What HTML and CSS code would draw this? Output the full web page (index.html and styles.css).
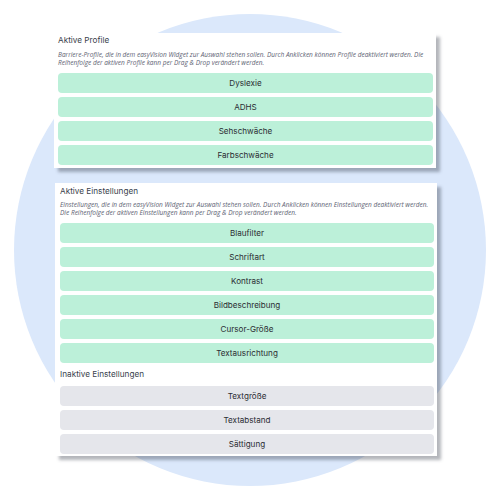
FILE: index.html
```html
<!DOCTYPE html>
<html lang="de">
<head>
<meta charset="utf-8">
<link rel="stylesheet" href="styles.css">
</head>
<body>
<div class="bg-circle"></div>
<main class="page">
  <section class="card card-profiles">
    <h2 class="title">Aktive Profile</h2>
    <p class="desc">Barriere-Profile, die in dem easyVision Widget zur Auswahl stehen sollen. Durch Anklicken können Profile deaktiviert werden. Die Reihenfolge der aktiven Profile kann per Drag &amp; Drop verändert werden.</p>
    <ul class="list">
      <li class="item active">Dyslexie</li>
      <li class="item active">ADHS</li>
      <li class="item active">Sehschwäche</li>
      <li class="item active">Farbschwäche</li>
    </ul>
  </section>
  <section class="card card-settings">
    <h2 class="title">Aktive Einstellungen</h2>
    <p class="desc">Einstellungen, die in dem easyVision Widget zur Auswahl stehen sollen. Durch Anklicken können Einstellungen deaktiviert werden. Die Reihenfolge der aktiven Einstellungen kann per Drag &amp; Drop verändert werden.</p>
    <ul class="list">
      <li class="item active">Blaufilter</li>
      <li class="item active">Schriftart</li>
      <li class="item active">Kontrast</li>
      <li class="item active">Bildbeschreibung</li>
      <li class="item active">Cursor-Größe</li>
      <li class="item active">Textausrichtung</li>
    </ul>
    <h2 class="title title-inactive">Inaktive Einstellungen</h2>
    <ul class="list">
      <li class="item inactive">Textgröße</li>
      <li class="item inactive">Textabstand</li>
      <li class="item inactive">Sättigung</li>
    </ul>
  </section>
</main>
</body>
</html>
```

FILE: styles.css
```css
html, body {
  margin: 0;
  padding: 0;
  background: #ffffff;
  width: 500px;
  height: 500px;
  overflow: hidden;
  font-family: Inter, "Noto Sans", sans-serif;
}

.bg-circle {
  position: absolute;
  left: 14px;
  top: 14px;
  width: 472px;
  height: 472px;
  border-radius: 50%;
  background: #dbe8fb;
  z-index: 0;
}

.page {
  position: relative;
  z-index: 1;
  display: flex;
  flex-direction: column;
  padding-top: 33px;
  padding-left: 54px;
}

.card {
  background: #ffffff;
  width: 382px;
  box-sizing: border-box;
  box-shadow: 4px 4px 3px rgba(40, 45, 60, 0.35);
  display: flex;
  flex-direction: column;
}

.card-profiles {
  padding: 2px 3px 3px 4px;
}

.card-settings {
  margin-top: 15px;
  margin-left: 1px;
  padding: 3px 3px 2px 5px;
}

.title {
  margin: 0;
  font-size: 8.2px;
  line-height: 10px;
  font-weight: 400;
  color: #3a3f4c;
}

.desc {
  margin: 6px 0 6px 0;
  font-family: "Open Sans", sans-serif;
  font-style: italic;
  font-size: 6.5px;
  line-height: 8px;
  color: #5d6373;
}

.card-settings .desc {
  margin-top: 4.5px;
  margin-bottom: 6.5px;
}

.list {
  list-style: none;
  margin: 0;
  padding: 0;
  display: flex;
  flex-direction: column;
  gap: 4px;
}

.item {
  height: 20px;
  border-radius: 4px;
  display: flex;
  align-items: center;
  justify-content: center;
  font-size: 8.1px;
  color: #2b2d33;
}

.item.active {
  background: #bcf0d9;
}

.item.inactive {
  background: #e5e6eb;
}

.title-inactive {
  margin: 6px 0 7px 0;
}
```
